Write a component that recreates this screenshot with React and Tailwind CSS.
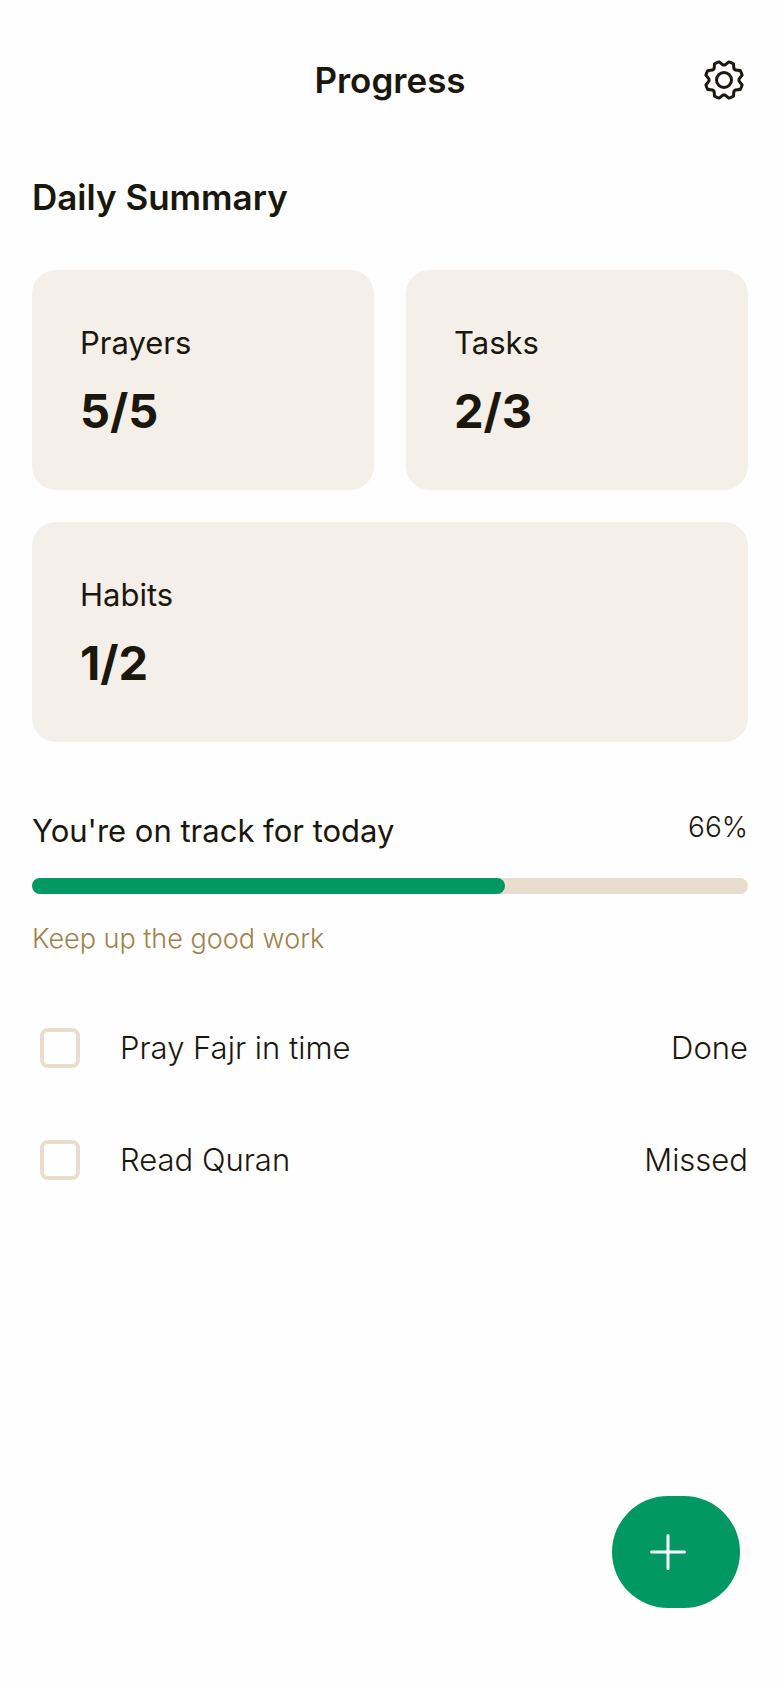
import { PiGear } from "react-icons/pi";

const stats = [
  { label: "Prayers", value: "5/5", span: "col-span-1" },
  { label: "Tasks", value: "2/3", span: "col-span-1" },
  { label: "Habits", value: "1/2", span: "col-span-2" },
];

const tasks = [
  { id: "fajr", label: "Pray Fajr in time", status: "Done" },
  { id: "quran", label: "Read Quran", status: "Missed" },
];

export default function App() {
  return (
    <div className="flex min-h-screen flex-col bg-[#fefefe] font-['Inter','Noto_Sans',sans-serif] text-[#1a170d]">
      <header className="grid grid-cols-[1fr_auto_1fr] items-center px-8 pt-8 pb-4">
        <h1 className="col-start-2 text-[35px] leading-[46px] font-semibold">Progress</h1>
        <button type="button" aria-label="Settings" className="flex h-24 w-12 items-center justify-center justify-self-end">
          <PiGear className="size-12" />
        </button>
      </header>

      <main className="flex flex-col px-8">
        <h2 className="mt-[30px] text-[35px] leading-[46px] font-semibold">Daily Summary</h2>

        <section className="mt-[50px] grid grid-cols-2 gap-8">
          {stats.map((s) => (
            <div key={s.label} className={`${s.span} rounded-3xl bg-[#f4efe8] p-12`}>
              <p className="text-[31px] leading-[50px]">{s.label}</p>
              <p className="mt-3 text-[47px] leading-[62px] font-bold">{s.value}</p>
            </div>
          ))}
        </section>

        <section className="mt-16 flex flex-col">
          <div className="flex justify-between">
            <p className="text-[31px] leading-[50px]">You're on track for today</p>
            <p className="text-[28px] leading-[42px] font-light">66%</p>
          </div>
          <div className="mt-[22px] h-4 rounded-lg bg-[#e9dece]">
            <div className="h-4 rounded-lg bg-[#019863]" style={{ width: "66%" }} />
          </div>
          <p className="mt-6 text-[27px] leading-[42px] font-light text-[#a1824a]">Keep up the good work</p>
        </section>

        <ul className="mt-8 flex flex-col">
          {tasks.map((t) => (
            <li key={t.id} className="flex h-28 items-center">
              <input
                id={t.id}
                type="checkbox"
                className="mx-2 size-10 appearance-none rounded-lg border-4 border-[#e9dece] checked:bg-[#019863]"
              />
              <label htmlFor={t.id} className="ml-8 flex-1 text-[31px] leading-[50px] font-light">
                {t.label}
              </label>
              <span className="text-[31px] leading-[50px] font-light">{t.status}</span>
            </li>
          ))}
        </ul>
      </main>

      <footer className="mt-auto flex justify-end px-10 pb-20">
        <button type="button" aria-label="Add" className="flex h-28 w-32 items-center rounded-full bg-[#019863] pl-8 text-white">
          <svg viewBox="0 0 48 48" className="size-12" fill="none" stroke="currentColor" strokeWidth="3" strokeLinecap="round">
            <path d="M24 7.500V40.500M7.500 24H40.500" />
          </svg>
        </button>
      </footer>
    </div>
  );
}
